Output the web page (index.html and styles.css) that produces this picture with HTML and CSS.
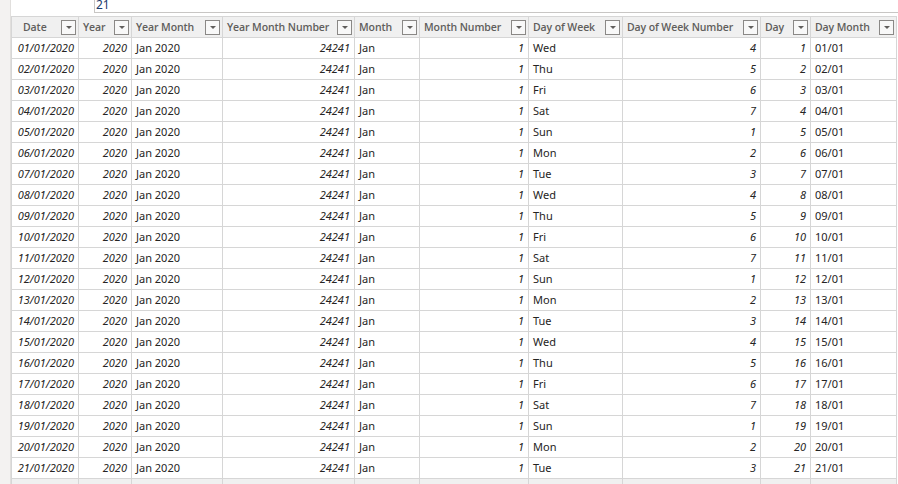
FILE: index.html
```html
<!DOCTYPE html>
<html>
<head>
<meta charset="utf-8">
<link rel="stylesheet" href="styles.css">
</head>
<body>
<div class="app">
  <div class="strip"></div>
  <div class="main">
    <div class="formula">
      <div class="formula-spacer"></div>
      <div class="formula-box">21</div>
    </div>
    <table class="grid">
      <colgroup>
        <col class="c1"><col class="c2"><col class="c3"><col class="c4"><col class="c5">
        <col class="c6"><col class="c7"><col class="c8"><col class="c9"><col class="c10">
      </colgroup>
      <thead>
        <tr>
          <th class="first"><div class="hd"><span>Date</span><i class="dd"></i></div></th>
          <th><div class="hd"><span>Year</span><i class="dd"></i></div></th>
          <th><div class="hd"><span>Year Month</span><i class="dd"></i></div></th>
          <th><div class="hd"><span>Year Month Number</span><i class="dd"></i></div></th>
          <th><div class="hd"><span>Month</span><i class="dd"></i></div></th>
          <th><div class="hd"><span>Month Number</span><i class="dd"></i></div></th>
          <th><div class="hd"><span>Day of Week</span><i class="dd"></i></div></th>
          <th><div class="hd"><span>Day of Week Number</span><i class="dd"></i></div></th>
          <th><div class="hd"><span>Day</span><i class="dd"></i></div></th>
          <th><div class="hd"><span>Day Month</span><i class="dd"></i></div></th>
        </tr>
      </thead>
      <tbody>
        <tr><td class="n">01/01/2020</td><td class="n">2020</td><td>Jan 2020</td><td class="n">24241</td><td>Jan</td><td class="n">1</td><td>Wed</td><td class="n">4</td><td class="n">1</td><td>01/01</td></tr>
        <tr><td class="n">02/01/2020</td><td class="n">2020</td><td>Jan 2020</td><td class="n">24241</td><td>Jan</td><td class="n">1</td><td>Thu</td><td class="n">5</td><td class="n">2</td><td>02/01</td></tr>
        <tr><td class="n">03/01/2020</td><td class="n">2020</td><td>Jan 2020</td><td class="n">24241</td><td>Jan</td><td class="n">1</td><td>Fri</td><td class="n">6</td><td class="n">3</td><td>03/01</td></tr>
        <tr><td class="n">04/01/2020</td><td class="n">2020</td><td>Jan 2020</td><td class="n">24241</td><td>Jan</td><td class="n">1</td><td>Sat</td><td class="n">7</td><td class="n">4</td><td>04/01</td></tr>
        <tr><td class="n">05/01/2020</td><td class="n">2020</td><td>Jan 2020</td><td class="n">24241</td><td>Jan</td><td class="n">1</td><td>Sun</td><td class="n">1</td><td class="n">5</td><td>05/01</td></tr>
        <tr><td class="n">06/01/2020</td><td class="n">2020</td><td>Jan 2020</td><td class="n">24241</td><td>Jan</td><td class="n">1</td><td>Mon</td><td class="n">2</td><td class="n">6</td><td>06/01</td></tr>
        <tr><td class="n">07/01/2020</td><td class="n">2020</td><td>Jan 2020</td><td class="n">24241</td><td>Jan</td><td class="n">1</td><td>Tue</td><td class="n">3</td><td class="n">7</td><td>07/01</td></tr>
        <tr><td class="n">08/01/2020</td><td class="n">2020</td><td>Jan 2020</td><td class="n">24241</td><td>Jan</td><td class="n">1</td><td>Wed</td><td class="n">4</td><td class="n">8</td><td>08/01</td></tr>
        <tr><td class="n">09/01/2020</td><td class="n">2020</td><td>Jan 2020</td><td class="n">24241</td><td>Jan</td><td class="n">1</td><td>Thu</td><td class="n">5</td><td class="n">9</td><td>09/01</td></tr>
        <tr><td class="n">10/01/2020</td><td class="n">2020</td><td>Jan 2020</td><td class="n">24241</td><td>Jan</td><td class="n">1</td><td>Fri</td><td class="n">6</td><td class="n">10</td><td>10/01</td></tr>
        <tr><td class="n">11/01/2020</td><td class="n">2020</td><td>Jan 2020</td><td class="n">24241</td><td>Jan</td><td class="n">1</td><td>Sat</td><td class="n">7</td><td class="n">11</td><td>11/01</td></tr>
        <tr><td class="n">12/01/2020</td><td class="n">2020</td><td>Jan 2020</td><td class="n">24241</td><td>Jan</td><td class="n">1</td><td>Sun</td><td class="n">1</td><td class="n">12</td><td>12/01</td></tr>
        <tr><td class="n">13/01/2020</td><td class="n">2020</td><td>Jan 2020</td><td class="n">24241</td><td>Jan</td><td class="n">1</td><td>Mon</td><td class="n">2</td><td class="n">13</td><td>13/01</td></tr>
        <tr><td class="n">14/01/2020</td><td class="n">2020</td><td>Jan 2020</td><td class="n">24241</td><td>Jan</td><td class="n">1</td><td>Tue</td><td class="n">3</td><td class="n">14</td><td>14/01</td></tr>
        <tr><td class="n">15/01/2020</td><td class="n">2020</td><td>Jan 2020</td><td class="n">24241</td><td>Jan</td><td class="n">1</td><td>Wed</td><td class="n">4</td><td class="n">15</td><td>15/01</td></tr>
        <tr><td class="n">16/01/2020</td><td class="n">2020</td><td>Jan 2020</td><td class="n">24241</td><td>Jan</td><td class="n">1</td><td>Thu</td><td class="n">5</td><td class="n">16</td><td>16/01</td></tr>
        <tr><td class="n">17/01/2020</td><td class="n">2020</td><td>Jan 2020</td><td class="n">24241</td><td>Jan</td><td class="n">1</td><td>Fri</td><td class="n">6</td><td class="n">17</td><td>17/01</td></tr>
        <tr><td class="n">18/01/2020</td><td class="n">2020</td><td>Jan 2020</td><td class="n">24241</td><td>Jan</td><td class="n">1</td><td>Sat</td><td class="n">7</td><td class="n">18</td><td>18/01</td></tr>
        <tr><td class="n">19/01/2020</td><td class="n">2020</td><td>Jan 2020</td><td class="n">24241</td><td>Jan</td><td class="n">1</td><td>Sun</td><td class="n">1</td><td class="n">19</td><td>19/01</td></tr>
        <tr><td class="n">20/01/2020</td><td class="n">2020</td><td>Jan 2020</td><td class="n">24241</td><td>Jan</td><td class="n">1</td><td>Mon</td><td class="n">2</td><td class="n">20</td><td>20/01</td></tr>
        <tr><td class="n">21/01/2020</td><td class="n">2020</td><td>Jan 2020</td><td class="n">24241</td><td>Jan</td><td class="n">1</td><td>Tue</td><td class="n">3</td><td class="n">21</td><td>21/01</td></tr>
        <tr class="ghost"><td></td><td></td><td></td><td></td><td></td><td></td><td></td><td></td><td></td><td></td></tr>
      </tbody>
    </table>
  </div>
</div>
</body>
</html>
```
FILE: styles.css
```css
html, body {
  margin: 0;
  padding: 0;
  width: 898px;
  height: 484px;
  overflow: hidden;
  background: #ffffff;
  font-family: "Noto Sans", "Open Sans", sans-serif;
  font-size: 11px;
  color: #252423;
}
.app {
  display: flex;
  height: 484px;
}
.strip {
  width: 10px;
  flex: none;
  background: #f3f2f1;
  border-right: 1px solid #e1dfdd;
}
.main {
  flex: 1;
  display: flex;
  flex-direction: column;
  min-width: 0;
}
.formula {
  display: flex;
  height: 16px;
  flex: none;
}
.formula-spacer {
  width: 83px;
  flex: none;
}
.formula-box {
  flex: 1;
  height: 12px;
  border-left: 1px solid #c8c6c4;
  border-bottom: 1px solid #c8c6c4;
  padding-left: 1px;
  color: #1b3a6b;
  font-size: 12px;
  line-height: 10px;
  overflow: hidden;
  box-sizing: content-box;
}
.grid {
  border-collapse: collapse;
  table-layout: fixed;
  width: 886px;
}
.c1 { width: 67px; }
.c2 { width: 53px; }
.c3 { width: 91px; }
.c4 { width: 132px; }
.c5 { width: 65px; }
.c6 { width: 109px; }
.c7 { width: 94px; }
.c8 { width: 138px; }
.c9 { width: 50px; }
.c10 { width: 86px; }
.grid th, .grid td {
  border: 1px solid #d6d6d6;
  padding: 0;
  white-space: nowrap;
  overflow: hidden;
}
.grid th {
  height: 20px;
  background: #f0f0f0;
  color: #605e5c;
  font-family: "Open Sans", "Noto Sans", sans-serif;
  font-weight: 600;
  font-size: 10.5px;
  letter-spacing: -0.1px;
  text-align: left;
}
.hd {
  display: flex;
  align-items: center;
  justify-content: space-between;
  padding: 0 2px 0 4px;
  height: 20px;
}
.first .hd {
  padding-left: 11px;
}
.dd {
  width: 13px;
  height: 13px;
  flex: none;
  border: 1px solid #8a8886;
  background: #f8f8f8;
  position: relative;
}
.dd::after {
  content: "";
  position: absolute;
  left: 4px;
  top: 5px;
  border-left: 3px solid transparent;
  border-right: 3px solid transparent;
  border-top: 3px solid #605e5c;
}
.grid td {
  height: 20px;
  padding: 0 4px 0 4px;
  line-height: 20px;
}
.grid td.n {
  text-align: right;
  font-style: italic;
}
.grid tr.ghost td {
  background: #f0f0f0;
  height: 20px;
}
```
